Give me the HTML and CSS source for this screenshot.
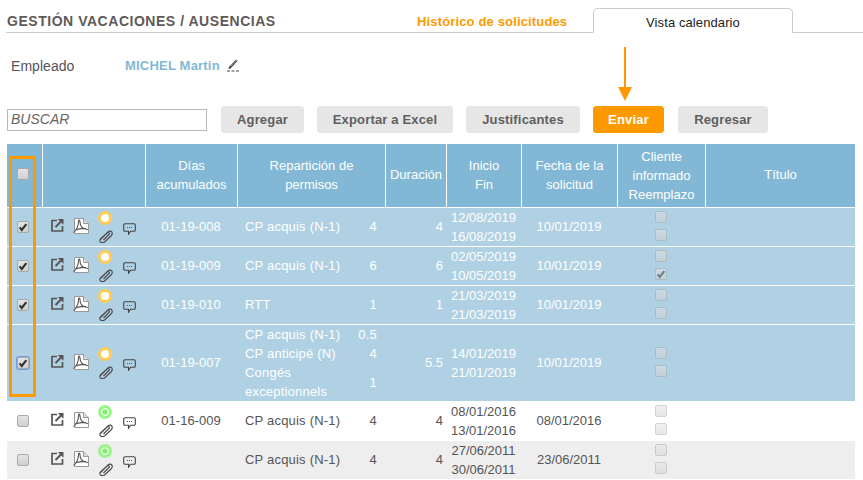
FILE: index.html
```html
<!DOCTYPE html>
<html lang="es">
<head>
<meta charset="utf-8">
<title>Gestión vacaciones / ausencias</title>
<link rel="stylesheet" href="styles.css">
</head>
<body>
<svg class="sprite" aria-hidden="true">
  <symbol id="i-ext" viewBox="0 0 13 14"><path d="M6 2.500H1v10.500h10.500V8" fill="none" stroke="#555" stroke-width="1.700"/><path d="M4.500 9 10 3.500" fill="none" stroke="#555" stroke-width="2"/><path d="M6.800 1h5.700v5.700z" fill="#555"/></symbol>
  <symbol id="i-pdf" viewBox="0 0 16 16"><path d="M1.500.5h9l5 5v10h-14z" fill="#fff" stroke="#999"/><path d="M10.500.5v5h5" fill="#ddd" stroke="#999"/><path d="M.5 14.500C3 13 5.500 8 5.500 4c0-3 1.500-2 1.500 0 0 4 3 7 8 7.500M2 12c3-1 7-2 11-1.500" fill="none" stroke="#555" stroke-width="1.100"/></symbol>
  <symbol id="i-clip" viewBox="0 0 14 13"><path d="M1.500 9.500 9 2C10.500.5 13 .8 13.200 3 13.400 4 13 5 12 6L5.500 12C4 13 1 13 .8 10.800.7 10 1 9.500 1.500 9L8 3C9 2 10.700 2.800 10.500 4L4.500 10" fill="none" stroke="#4a4a4a" stroke-width="1.150"/></symbol>
  <symbol id="i-msg" viewBox="0 0 13 12"><path d="M2 .7h9c.7 0 1.300.6 1.300 1.300v5c0 .7-.6 1.300-1.300 1.300H7.500l-2 3v-3H2C1.300 8.300.7 7.700.7 7V2C.7 1.300 1.300.7 2 .7z" fill="none" stroke="#444" stroke-width="1.100"/><path d="M4 4.500h1M6 4.500h1M8 4.500h1" stroke="#555"/></symbol>
  <symbol id="i-check" viewBox="0 0 12 12"><path d="M2 6.500 4.500 9.500 10 2.500" fill="none" stroke="currentColor" stroke-width="2.600"/></symbol>
</svg>

<header class="top">
  <h1 class="title">GESTIÓN VACACIONES / AUSENCIAS</h1>
  <a class="tab-link">Histórico de solicitudes</a>
  <a class="tab">Vista calendario</a>
</header>

<div class="employee">
  <span class="employee-label">Empleado</span>
  <span class="employee-name">MICHEL Martin</span>
  <svg class="pen" viewBox="0 0 12 14"><path d="M2 9 9 1.500l1.500 1.500L3.500 10.500 1.500 11z" fill="#444"/><path d="M4 8l6-6" stroke="#bbb" stroke-width=".6"/><path d="M0 13h3M4.500 13h3M9 13h3" stroke="#444"/></svg>
</div>

<div class="toolbar">
  <div class="search">BUSCAR</div>
  <button class="btn btn-add">Agregar</button>
  <button class="btn btn-export">Exportar a Excel</button>
  <button class="btn btn-just">Justificantes</button>
  <button class="btn btn-send">Enviar</button>
  <button class="btn btn-back">Regresar</button>
</div>

<table class="grid">
  <colgroup>
    <col class="c1"><col class="c2"><col class="c3"><col class="c4"><col class="c5"><col class="c6"><col class="c7"><col class="c8"><col class="c9">
  </colgroup>
  <thead>
    <tr>
      <th><span class="cb"></span></th>
      <th></th>
      <th>Días<br>acumulados</th>
      <th>Repartición de<br>permisos</th>
      <th>Duración</th>
      <th>Inicio<br>Fin</th>
      <th>Fecha de la<br>solicitud</th>
      <th class="tri">Cliente<br>informado<br>Reemplazo</th>
      <th>Título</th>
    </tr>
  </thead>
  <tbody>
    <tr class="sel">
      <td><span class="cb on"><svg><use href="#i-check"/></svg></span></td>
      <td><div class="icons"><svg class="ext"><use href="#i-ext"/></svg><svg class="pdf"><use href="#i-pdf"/></svg><span class="stack"><i class="dot"></i><svg class="clip"><use href="#i-clip"/></svg></span><svg class="msg"><use href="#i-msg"/></svg></div></td>
      <td class="ctr one">01-19-008</td>
      <td class="one"><div class="rep"><span>CP acquis (N-1)</span><span class="n">4</span></div></td>
      <td class="dur one">4</td>
      <td class="ctr">12/08/2019<br>16/08/2019</td>
      <td class="ctr one">10/01/2019</td>
      <td class="ctr"><div class="dis"><span class="cb off"></span><span class="cb off"></span></div></td>
      <td></td>
    </tr>
    <tr class="sel">
      <td><span class="cb on"><svg><use href="#i-check"/></svg></span></td>
      <td><div class="icons"><svg class="ext"><use href="#i-ext"/></svg><svg class="pdf"><use href="#i-pdf"/></svg><span class="stack"><i class="dot"></i><svg class="clip"><use href="#i-clip"/></svg></span><svg class="msg"><use href="#i-msg"/></svg></div></td>
      <td class="ctr one">01-19-009</td>
      <td class="one"><div class="rep"><span>CP acquis (N-1)</span><span class="n">6</span></div></td>
      <td class="dur one">6</td>
      <td class="ctr">02/05/2019<br>10/05/2019</td>
      <td class="ctr one">10/01/2019</td>
      <td class="ctr"><div class="dis"><span class="cb off"></span><span class="cb off on"><svg><use href="#i-check"/></svg></span></div></td>
      <td></td>
    </tr>
    <tr class="sel">
      <td><span class="cb on"><svg><use href="#i-check"/></svg></span></td>
      <td><div class="icons"><svg class="ext"><use href="#i-ext"/></svg><svg class="pdf"><use href="#i-pdf"/></svg><span class="stack"><i class="dot"></i><svg class="clip"><use href="#i-clip"/></svg></span><svg class="msg"><use href="#i-msg"/></svg></div></td>
      <td class="ctr one">01-19-010</td>
      <td class="one"><div class="rep"><span>RTT</span><span class="n">1</span></div></td>
      <td class="dur one">1</td>
      <td class="ctr">21/03/2019<br>21/03/2019</td>
      <td class="ctr one">10/01/2019</td>
      <td class="ctr"><div class="dis"><span class="cb off"></span><span class="cb off"></span></div></td>
      <td></td>
    </tr>
    <tr class="sel">
      <td><span class="cb on focus"><svg><use href="#i-check"/></svg></span></td>
      <td><div class="icons"><svg class="ext"><use href="#i-ext"/></svg><svg class="pdf"><use href="#i-pdf"/></svg><span class="stack"><i class="dot"></i><svg class="clip"><use href="#i-clip"/></svg></span><svg class="msg"><use href="#i-msg"/></svg></div></td>
      <td class="ctr one">01-19-007</td>
      <td><div class="rep"><span>CP acquis (N-1)</span><span class="n">0.5</span><span>CP anticipé (N)</span><span class="n">4</span><span>Congés exceptionnels</span><span class="n">1</span></div></td>
      <td class="dur one">5.5</td>
      <td class="ctr">14/01/2019<br>21/01/2019</td>
      <td class="ctr one">10/01/2019</td>
      <td class="ctr"><div class="dis"><span class="cb off"></span><span class="cb off"></span></div></td>
      <td></td>
    </tr>
    <tr class="plain">
      <td><span class="cb"></span></td>
      <td><div class="icons"><svg class="ext"><use href="#i-ext"/></svg><svg class="pdf"><use href="#i-pdf"/></svg><span class="stack"><i class="dot green"></i><svg class="clip"><use href="#i-clip"/></svg></span><svg class="msg"><use href="#i-msg"/></svg></div></td>
      <td class="ctr one">01-16-009</td>
      <td class="one"><div class="rep"><span>CP acquis (N-1)</span><span class="n">4</span></div></td>
      <td class="dur one">4</td>
      <td class="ctr">08/01/2016<br>13/01/2016</td>
      <td class="ctr one">08/01/2016</td>
      <td class="ctr"><div class="dis"><span class="cb off"></span><span class="cb off"></span></div></td>
      <td></td>
    </tr>
    <tr class="plain alt">
      <td><span class="cb"></span></td>
      <td><div class="icons"><svg class="ext"><use href="#i-ext"/></svg><svg class="pdf"><use href="#i-pdf"/></svg><span class="stack"><i class="dot green"></i><svg class="clip"><use href="#i-clip"/></svg></span><svg class="msg"><use href="#i-msg"/></svg></div></td>
      <td class="ctr one"></td>
      <td class="one"><div class="rep"><span>CP acquis (N-1)</span><span class="n">4</span></div></td>
      <td class="dur one">4</td>
      <td class="ctr">27/06/2011<br>30/06/2011</td>
      <td class="ctr one">23/06/2011</td>
      <td class="ctr"><div class="dis"><span class="cb off"></span><span class="cb off"></span></div></td>
      <td></td>
    </tr>
  </tbody>
</table>

<div class="mark-box"></div>
<svg class="mark-arrow" viewBox="0 0 16 55"><path d="M8 0v42" stroke="#f90" stroke-width="2"/><path d="M1 40h14L8 54z" fill="#f90"/></svg>
</body>
</html>
```

FILE: styles.css
```css
* { box-sizing: border-box; }
html, body { margin: 0; padding: 0; }
body {
  position: relative;
  width: 863px;
  height: 480px;
  overflow: hidden;
  background: #fff;
  color: #555;
  font: 13px/19px "Liberation Sans", Arial, sans-serif;
}
.sprite { display: none; }

.top {
  display: flex;
  align-items: flex-end;
  height: 33px;
  margin-left: 6px;
  border-bottom: 1px solid #ccc;
}
.title {
  width: 410px;
  margin: 0 0 1px 1px;
  font-size: 14px;
  line-height: 19px;
  font-weight: bold;
  letter-spacing: .53px;
  color: #5f5a58;
}
.tab-link {
  width: 176px;
  margin-bottom: 1px;
  font-weight: bold;
  font-size: 13px;
  letter-spacing: .15px;
  color: #f90;
}
.tab {
  width: 200px;
  height: 25px;
  margin-bottom: -1px;
  border: 1px solid #ccc;
  border-bottom-color: #fff;
  border-radius: 5px 5px 0 0;
  background: #fff;
  color: #222;
  letter-spacing: .1px;
  line-height: 28px;
  text-align: center;
}

.employee {
  display: flex;
  align-items: center;
  height: 19px;
  margin-top: 23px;
  padding-left: 11px;
}
.employee-label { width: 114px; padding-top: 1px; font-size: 14px; letter-spacing: .05px; }
.employee-name { font-weight: bold; letter-spacing: .2px; color: #82b8d5; }
.pen { width: 12px; height: 14px; margin-left: 7px; margin-bottom: 2px; }

.toolbar {
  display: flex;
  align-items: center;
  height: 27px;
  margin-top: 31px;
  padding-left: 7px;
}
.search {
  width: 200px;
  height: 22px;
  border: 1px solid #bdb5b0;
  padding-left: 3px;
  font-size: 14px;
  font-style: italic;
  line-height: 19px;
  color: #666;
}
.btn {
  height: 27px;
  padding: 0;
  border: 1px solid #e6e6e6;
  border-radius: 3px;
  background: #e6e6e6;
  color: #5f5f5f;
  font: bold 13px "Liberation Sans", Arial, sans-serif;
  letter-spacing: .17px;
}
.btn-add { width: 83px; margin-left: 14px; }
.btn-export { width: 136px; margin-left: 13px; }
.btn-just { width: 114px; margin-left: 13px; }
.btn-send { width: 71px; margin-left: 13px; background: #f90; border-color: #f90; color: #fff; }
.btn-back { width: 90px; margin-left: 14px; }

.grid {
  width: 848px;
  margin: 11px 0 0 7px;
  border-collapse: separate;
  border-spacing: 0;
  table-layout: fixed;
}
.c1 { width: 35px; } .c2 { width: 103px; } .c3 { width: 92px; } .c4 { width: 148px; }
.c5 { width: 61px; } .c6 { width: 75px; } .c7 { width: 96px; } .c8 { width: 88px; } .c9 { width: 150px; }

th {
  height: 64px;
  padding: 0 0 2px;
  background: #82b8d5;
  border-left: 1px solid #fff;
  border-bottom: 1px solid #fff;
  color: #fff;
  font-weight: normal;
  text-align: center;
}
th:first-child { border-left: 0; padding: 0 3px 5px 0; }
th.tri { padding-bottom: 0; }
td {
  height: 39px;
  padding: 0;
  border-bottom: 1px solid #fff;
  text-align: left;
  vertical-align: middle;
}
td:first-child { text-align: center; padding: 0 3px 3px 0; }
.sel td { background: #b0d1e3; color: #fff; }
.plain td { color: #555; }
.alt td { background: #eee; }
.ctr { text-align: center; }
.one { padding-bottom: 2px; }
.dur { text-align: right; padding-right: 3px; }

.rep {
  display: grid;
  grid-template-columns: 106px 26px;
  align-items: center;
  padding-left: 8px;
  letter-spacing: .2px;
}
.n { text-align: right; }

.cb {
  display: inline-block;
  width: 12px;
  height: 12px;
  border: 1px solid #aaa;
  border-radius: 2px;
  background: linear-gradient(#e4e4e4, #d0d0d0);
  color: #333;
  vertical-align: middle;
}
.cb svg { display: block; width: 10px; height: 10px; }
.focus { box-shadow: 0 0 0 1px #6f9fe0; }
.off { opacity: .5; }
.dis { display: flex; flex-direction: column; align-items: center; gap: 6px; margin-bottom: 2px; }

.icons {
  display: flex;
  align-items: center;
  padding-left: 9px;
}
.ext { width: 13px; height: 14px; margin-top: -4px; }
.pdf { width: 16px; height: 16px; margin-left: 9px; margin-top: -3px; }
.stack { display: flex; flex-direction: column; align-items: center; gap: 5px; width: 14px; margin-left: 9px; }
.dot {
  display: block;
  width: 14px;
  height: 14px;
  border: 3px solid #ffcc55;
  border-radius: 50%;
  background: #fff;
}
.dot.green { border-color: #9cf58c; background: #7fec6a; box-shadow: inset 0 0 0 1.500px #e8ffe0; }
.clip { width: 14px; height: 13px; margin-left: 1px; }
.msg { width: 13px; height: 12px; margin-left: 11px; margin-top: 3px; }

.mark-box {
  position: absolute;
  left: 9px;
  top: 156px;
  width: 27px;
  height: 241px;
  border: 3px solid #f90;
}
.mark-arrow {
  position: absolute;
  left: 617px;
  top: 47px;
  width: 16px;
  height: 55px;
}
```
